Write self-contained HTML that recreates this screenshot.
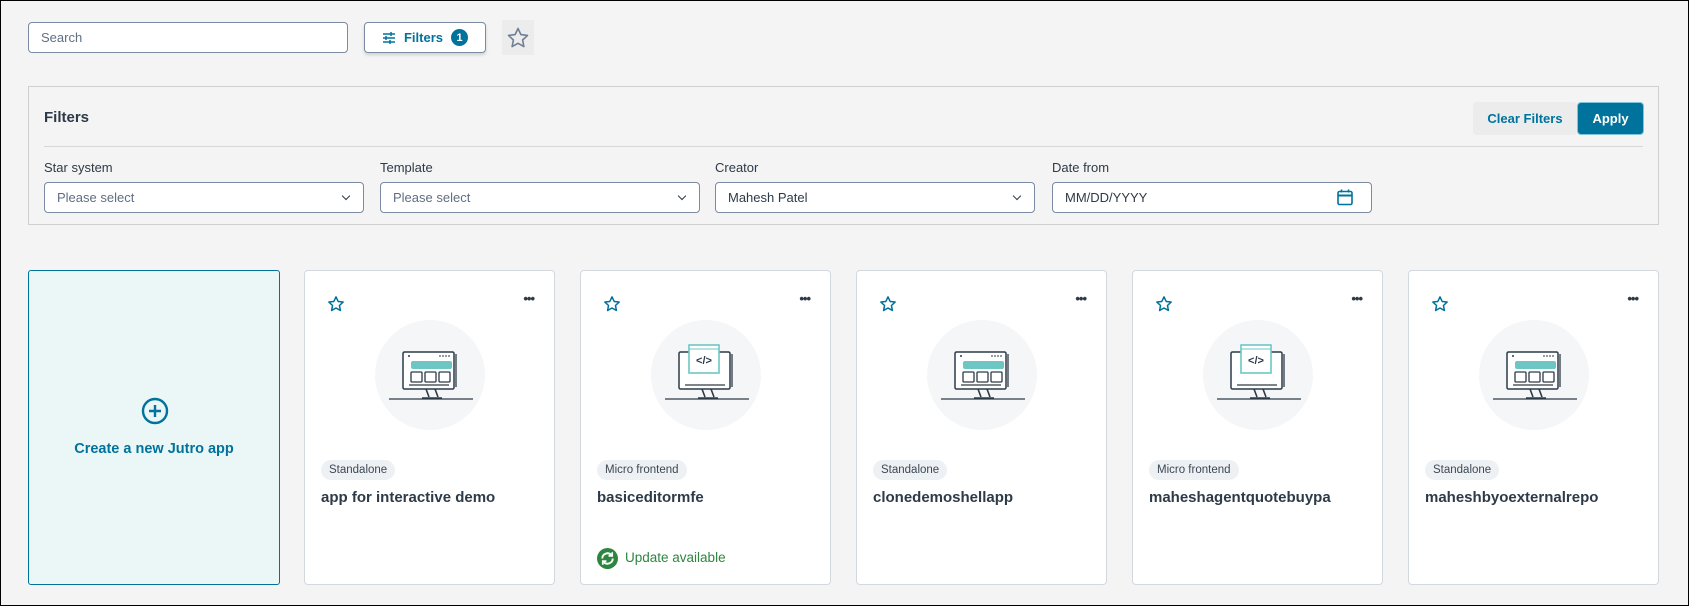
<!DOCTYPE html>
<html><head><meta charset="utf-8"><style>
*{box-sizing:border-box;margin:0;padding:0}
body{width:1689px;height:606px;background:#f4f4f4;font-family:"Liberation Sans",sans-serif;position:relative;overflow:hidden;border:1px solid #000;color:#2d3a47}
.a{position:absolute}
.inp{background:#fff;border:1px solid #7a8ba3;border-radius:4px;font-size:13px;color:#5f6f82;padding-left:12px;display:flex;align-items:center}
.lbl{font-size:13px;color:#2d3a47}
.card{position:absolute;top:269px;width:251px;height:315px;background:#fff;border:1px solid #d3d8df;border-radius:4px}
.tag{position:absolute;left:16px;top:189px;height:20px;padding:0 8px;background:#eef1f4;border-radius:10px;font-size:11.5px;line-height:20px;color:#3c4855}
.ttl{position:absolute;left:16px;top:218px;font-size:15px;font-weight:bold;color:#2d3a47}
.circ{position:absolute;left:70px;top:49px;width:110px;height:110px;border-radius:50%;background:#f5f6f8}
.chev{position:absolute;right:14px;top:10px;width:6px;height:6px;border-right:1.5px solid #2d3a47;border-bottom:1.5px solid #2d3a47;transform:rotate(45deg)}
</style></head><body>
<div class="a inp" style="left:27px;top:21px;width:320px;height:31px">Search</div>
<div class="a" style="left:363px;top:21px;width:122px;height:31px;background:#fff;border:1px solid #7a8ba3;border-radius:4px;box-shadow:0 2px 3px rgba(0,0,0,.15);display:flex;align-items:center;justify-content:center;gap:8px;color:#00739d;font-weight:bold;font-size:13px">
<svg width="14" height="12" viewBox="0 0 14 12"><g stroke="#00739d" stroke-width="1.5"><path d="M1 2h12M1 6h12M1 10h12"/><path d="M9 0v4M4 4v4M8 8v4" /></g></svg>Filters<span style="width:17px;height:17px;border-radius:50%;background:#00739d;color:#fff;font-size:11px;display:inline-flex;align-items:center;justify-content:center">1</span></div>
<div class="a" style="left:501px;top:19px;width:32px;height:35px;background:#ececec;display:flex;align-items:center;justify-content:center"><svg width="24" height="24" viewBox="0 0 24 24"><path d="M12 2.5l2.9 6.1 6.6.8-4.9 4.6 1.3 6.6L12 17.3l-5.9 3.3 1.3-6.6-4.9-4.6 6.6-.8z" fill="none" stroke="#6f7f94" stroke-width="1.6" stroke-linejoin="round"/></svg></div>

<div class="a" style="left:27px;top:85px;width:1631px;height:139px;border:1px solid #cfcfcf;background:#f4f4f4"></div>
<div class="a" style="left:43px;top:108px;font-size:15px;font-weight:bold">Filters</div>
<div class="a" style="left:1472px;top:101px;width:104px;height:33px;background:#ececec;border-radius:4px;color:#00739d;font-weight:bold;font-size:13px;display:flex;align-items:center;justify-content:center">Clear Filters</div>
<div class="a" style="left:1576px;top:101px;width:67px;height:33px;background:#00739d;border:1px solid #7fc3dc;border-radius:4px;color:#fff;font-weight:bold;font-size:13px;display:flex;align-items:center;justify-content:center">Apply</div>
<div class="a" style="left:43px;top:145px;width:1599px;height:1px;background:#d8d8d8"></div>
<div class="a lbl" style="left:43px;top:159px">Star system</div>
<div class="a lbl" style="left:379px;top:159px">Template</div>
<div class="a lbl" style="left:714px;top:159px">Creator</div>
<div class="a lbl" style="left:1051px;top:159px">Date from</div>
<div class="a inp" style="left:43px;top:181px;width:320px;height:31px">Please select<span class="chev"></span></div>
<div class="a inp" style="left:379px;top:181px;width:320px;height:31px">Please select<span class="chev"></span></div>
<div class="a inp" style="left:714px;top:181px;width:320px;height:31px;color:#2d3a47">Mahesh Patel<span class="chev"></span></div>
<div class="a inp" style="left:1051px;top:181px;width:320px;height:31px;color:#2d3a47">MM/DD/YYYY<svg class="a" style="right:18px;top:6px" width="16" height="17" viewBox="0 0 16 17"><rect x="1" y="2.5" width="14" height="13" rx="1.5" fill="none" stroke="#00739d" stroke-width="1.6"/><path d="M1 6.5h14" stroke="#00739d" stroke-width="2"/><path d="M4.5 0.5v3M11.5 0.5v3" stroke="#00739d" stroke-width="1.6"/></svg></div>

<div class="a" style="left:27px;top:269px;width:252px;height:315px;background:#ebf6f6;border:1px solid #00739d;border-radius:3px">
<svg class="a" style="left:112px;top:126px" width="28" height="28" viewBox="0 0 28 28"><circle cx="14" cy="14" r="12" fill="none" stroke="#00739d" stroke-width="2.4"/><path d="M14 8v12M8 14h12" stroke="#00739d" stroke-width="2.4"/></svg>
<div class="a" style="left:0;width:250px;top:170px;text-align:center;font-size:14.5px;font-weight:bold;color:#00739d">Create a new Jutro app</div>
</div>

<svg width="0" height="0" style="position:absolute"><defs>
<g id="mon"><rect x="-27" y="-23" width="51" height="37" rx="1.5" fill="#fff" stroke="#2d3a47" stroke-width="1.5"/><path d="M26-21v33" stroke="#2d3a47" stroke-width="1.3" fill="none"/><path d="M-21 10h40" stroke="#2d3a47" stroke-width="1.3"/><path d="M-4 14l3 8M5 14l3 8M-8 23h20" stroke="#2d3a47" stroke-width="1.6"/><path d="M-41 24h84" stroke="#2d3a47" stroke-width="1.3"/></g>
</defs></svg>

<div class="card" style="left:303px"><svg class="a" style="left:22px;top:24px" width="18" height="18" viewBox="0 0 24 24"><path d="M12 2.5l2.9 6.1 6.6.8-4.9 4.6 1.3 6.6L12 17.3l-5.9 3.3 1.3-6.6-4.9-4.6 6.6-.8z" fill="none" stroke="#00739d" stroke-width="2" stroke-linejoin="round"/></svg><div class="a" style="right:20px;top:20px;font-size:13px;font-weight:bold;letter-spacing:-1px">•••</div><div class="circ"></div>
<svg class="a" style="left:70px;top:49px" width="110" height="110" viewBox="-55 -55 110 110"><use href="#mon"/><rect x="-19" y="-14" width="41" height="8" rx="2" fill="#6cc7c4"/><g fill="none" stroke="#2d3a47" stroke-width="1.3"><rect x="-19" y="-3" width="11" height="10" rx="1"/><rect x="-5" y="-3" width="11" height="10" rx="1"/><rect x="9" y="-3" width="11" height="10" rx="1"/></g><path d="M9-19h12" stroke="#2d3a47" stroke-width="1" stroke-dasharray="2 1"/><circle cx="-21" cy="-19" r="1" fill="#2d3a47"/></svg>
<div class="tag">Standalone</div><div class="ttl">app for interactive demo</div></div>

<div class="card" style="left:579px"><svg class="a" style="left:22px;top:24px" width="18" height="18" viewBox="0 0 24 24"><path d="M12 2.5l2.9 6.1 6.6.8-4.9 4.6 1.3 6.6L12 17.3l-5.9 3.3 1.3-6.6-4.9-4.6 6.6-.8z" fill="none" stroke="#00739d" stroke-width="2" stroke-linejoin="round"/></svg><div class="a" style="right:20px;top:20px;font-size:13px;font-weight:bold;letter-spacing:-1px">•••</div><div class="circ"></div>
<svg class="a" style="left:70px;top:49px" width="110" height="110" viewBox="-55 -55 110 110"><use href="#mon"/><rect x="-17" y="-30" width="30" height="28" fill="#fff" stroke="#6cc7c4" stroke-width="1.6"/><path d="M-17-26h30" stroke="#6cc7c4" stroke-width="1"/><text x="-2" y="-11" font-size="11" font-weight="bold" text-anchor="middle" fill="#2d3a47" font-family="Liberation Sans">&lt;/&gt;</text></svg>
<div class="tag">Micro frontend</div><div class="ttl">basiceditormfe</div>
<svg class="a" style="left:16px;top:277px" width="21" height="21" viewBox="0 0 20 20"><circle cx="10" cy="10" r="10" fill="#2e8540"/><path d="M5 10a5 5 0 0 1 8.5-3.5M15 10a5 5 0 0 1-8.5 3.5" fill="none" stroke="#fff" stroke-width="1.8"/><path d="M14.5 4v3.5H11M5.5 16v-3.5H9" fill="none" stroke="#fff" stroke-width="1.6"/></svg>
<div class="a" style="left:44px;top:279px;font-size:13.5px;color:#2e8540">Update available</div></div>

<div class="card" style="left:855px"><svg class="a" style="left:22px;top:24px" width="18" height="18" viewBox="0 0 24 24"><path d="M12 2.5l2.9 6.1 6.6.8-4.9 4.6 1.3 6.6L12 17.3l-5.9 3.3 1.3-6.6-4.9-4.6 6.6-.8z" fill="none" stroke="#00739d" stroke-width="2" stroke-linejoin="round"/></svg><div class="a" style="right:20px;top:20px;font-size:13px;font-weight:bold;letter-spacing:-1px">•••</div><div class="circ"></div>
<svg class="a" style="left:70px;top:49px" width="110" height="110" viewBox="-55 -55 110 110"><use href="#mon"/><rect x="-19" y="-14" width="41" height="8" rx="2" fill="#6cc7c4"/><g fill="none" stroke="#2d3a47" stroke-width="1.3"><rect x="-19" y="-3" width="11" height="10" rx="1"/><rect x="-5" y="-3" width="11" height="10" rx="1"/><rect x="9" y="-3" width="11" height="10" rx="1"/></g><path d="M9-19h12" stroke="#2d3a47" stroke-width="1" stroke-dasharray="2 1"/><circle cx="-21" cy="-19" r="1" fill="#2d3a47"/></svg>
<div class="tag">Standalone</div><div class="ttl">clonedemoshellapp</div></div>

<div class="card" style="left:1131px"><svg class="a" style="left:22px;top:24px" width="18" height="18" viewBox="0 0 24 24"><path d="M12 2.5l2.9 6.1 6.6.8-4.9 4.6 1.3 6.6L12 17.3l-5.9 3.3 1.3-6.6-4.9-4.6 6.6-.8z" fill="none" stroke="#00739d" stroke-width="2" stroke-linejoin="round"/></svg><div class="a" style="right:20px;top:20px;font-size:13px;font-weight:bold;letter-spacing:-1px">•••</div><div class="circ"></div>
<svg class="a" style="left:70px;top:49px" width="110" height="110" viewBox="-55 -55 110 110"><use href="#mon"/><rect x="-17" y="-30" width="30" height="28" fill="#fff" stroke="#6cc7c4" stroke-width="1.6"/><path d="M-17-26h30" stroke="#6cc7c4" stroke-width="1"/><text x="-2" y="-11" font-size="11" font-weight="bold" text-anchor="middle" fill="#2d3a47" font-family="Liberation Sans">&lt;/&gt;</text></svg>
<div class="tag">Micro frontend</div><div class="ttl">maheshagentquotebuypa</div></div>

<div class="card" style="left:1407px"><svg class="a" style="left:22px;top:24px" width="18" height="18" viewBox="0 0 24 24"><path d="M12 2.5l2.9 6.1 6.6.8-4.9 4.6 1.3 6.6L12 17.3l-5.9 3.3 1.3-6.6-4.9-4.6 6.6-.8z" fill="none" stroke="#00739d" stroke-width="2" stroke-linejoin="round"/></svg><div class="a" style="right:20px;top:20px;font-size:13px;font-weight:bold;letter-spacing:-1px">•••</div><div class="circ"></div>
<svg class="a" style="left:70px;top:49px" width="110" height="110" viewBox="-55 -55 110 110"><use href="#mon"/><rect x="-19" y="-14" width="41" height="8" rx="2" fill="#6cc7c4"/><g fill="none" stroke="#2d3a47" stroke-width="1.3"><rect x="-19" y="-3" width="11" height="10" rx="1"/><rect x="-5" y="-3" width="11" height="10" rx="1"/><rect x="9" y="-3" width="11" height="10" rx="1"/></g><path d="M9-19h12" stroke="#2d3a47" stroke-width="1" stroke-dasharray="2 1"/><circle cx="-21" cy="-19" r="1" fill="#2d3a47"/></svg>
<div class="tag">Standalone</div><div class="ttl">maheshbyoexternalrepo</div></div>
</body></html>
